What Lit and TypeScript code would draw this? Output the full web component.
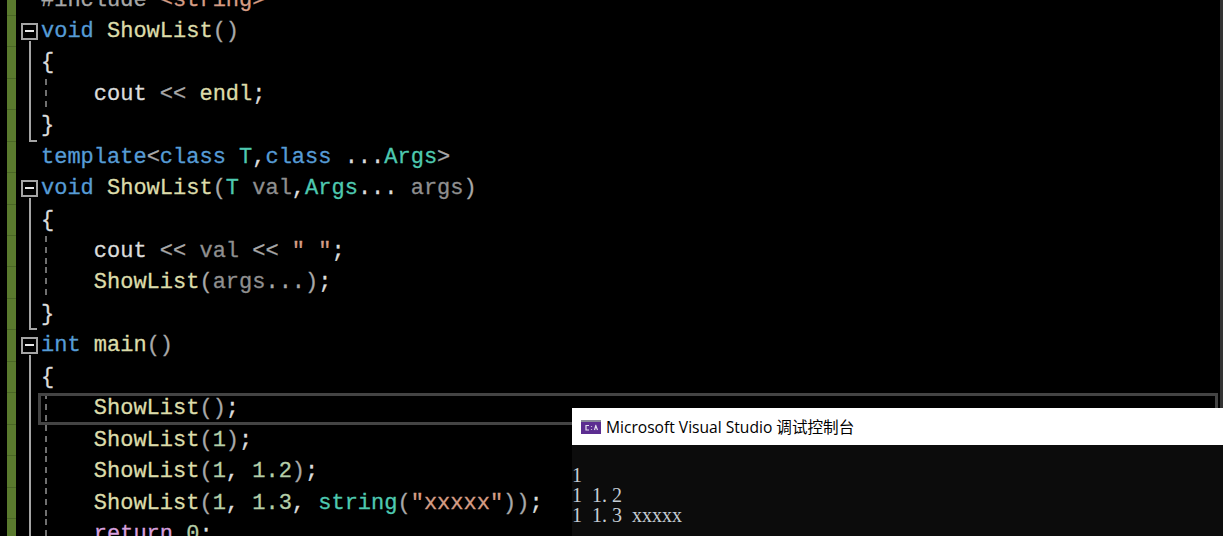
import { LitElement, html, css } from "lit";
import { customElement } from "lit/decorators.js";

type Seg = [string, string];
interface Line { fold: "" | "start" | "mid" | "end"; guide?: boolean; current?: boolean; segs: Seg[]; }

const k = (t: string): Seg => ["kw", t];
const f = (t: string): Seg => ["fn", t];
const p = (t: string): Seg => ["pl", t];
const g = (t: string): Seg => ["gr", t];
const a = (t: string): Seg => ["pa", t];
const c = (t: string): Seg => ["ty", t];
const n = (t: string): Seg => ["nu", t];
const s = (t: string): Seg => ["st", t];
const r = (t: string): Seg => ["rt", t];
const o = (t: string): Seg => ["or", t];

const LINES: Line[] = [
  { fold: "", segs: [g("#include "), o("<string>")] },
  { fold: "start", segs: [k("void "), f("ShowList"), g("()")] },
  { fold: "mid", segs: [p("{")] },
  { fold: "mid", guide: true, segs: [p("    cout "), g("<< "), f("endl"), p(";")] },
  { fold: "end", segs: [p("}")] },
  { fold: "", segs: [k("template"), g("<"), k("class "), c("T"), p(","), k("class "), p("..."), c("Args"), g(">")] },
  { fold: "start", segs: [k("void "), f("ShowList"), g("("), c("T "), a("val"), p(","), c("Args"), p("... "), a("args"), g(")")] },
  { fold: "mid", segs: [p("{")] },
  { fold: "mid", guide: true, segs: [p("    cout "), g("<< "), a("val"), g(" << "), s('" "'), p(";")] },
  { fold: "mid", guide: true, segs: [f("    ShowList"), g("("), a("args"), g("...)"), p(";")] },
  { fold: "end", segs: [p("}")] },
  { fold: "start", segs: [k("int "), f("main"), g("()")] },
  { fold: "mid", segs: [p("{")] },
  { fold: "mid", guide: true, current: true, segs: [f("    ShowList"), g("()"), p(";")] },
  { fold: "mid", guide: true, segs: [f("    ShowList"), g("("), n("1"), g(")"), p(";")] },
  { fold: "mid", guide: true, segs: [f("    ShowList"), g("("), n("1"), p(", "), n("1.2"), g(")"), p(";")] },
  { fold: "mid", guide: true, segs: [f("    ShowList"), g("("), n("1"), p(", "), n("1.3"), p(", "), c("string"), g("("), s('"xxxxx"'), g("))"), p(";")] },
  { fold: "mid", guide: true, segs: [r("    return "), n("0"), p(";")] },
];

@customElement("app-root")
export class AppRoot extends LitElement {
  static styles = css`
    :host { display: block; width: 1223px; height: 536px; background: #000; overflow: hidden; position: relative; }
    .editor { margin-top: -15.5px; }
    .row { display: flex; height: 31.44px; }
    .pad { width: 7px; flex: none; }
    .bar { width: 9px; flex: none; background: #5a7a2e; box-shadow: inset 0 -1px 0 #4a6626; }
    .foldcell { width: 25px; flex: none; position: relative; }
    .line { position: absolute; left: 13px; width: 2px; background: #a5a5a5; }
    .mid .line { top: 0; bottom: 0; }
    .end .line { top: 0; bottom: 0; }
    .end .foot { position: absolute; left: 13px; bottom: 0; width: 8px; height: 2px; background: #a5a5a5; }
    .box { position: absolute; left: 5px; top: 7px; width: 13px; height: 13px; border: 2px solid #a5a5a5; background: #000; }
    .box::after { content: ""; position: absolute; left: 2px; right: 2px; top: 5px; height: 2px; background: #e6e6e6; }
    .start .line { top: 25px; bottom: 0; }
    .code {
      flex: 1; position: relative; white-space: pre;
      font: 22px/31.44px "Liberation Mono", "DejaVu Sans Mono", monospace;
      -webkit-text-stroke: 0.3px;
    }
    .guide { background: repeating-linear-gradient(to bottom, #6f6f6f 0 6px, transparent 6px 11px) 4px 0 / 2px 100% no-repeat; }
    .current::after { content: ""; position: absolute; left: -3px; right: 5px; top: 0; bottom: 0; border: 3px solid #444; }
    .scroll { position: absolute; top: 0; right: 0; bottom: 0; width: 3px; background: #333; }
    .kw { color: #569cd6; }
    .fn { color: #dcdcaa; }
    .pl { color: #dcdcdc; }
    .gr { color: #a8a8a8; }
    .pa { color: #8f8f8f; }
    .ty { color: #4ec9b0; }
    .nu { color: #b5cea8; }
    .st, .or { color: #d69d85; }
    .rt { color: #d8a0df; }
    .console { position: absolute; left: 572px; top: 408px; right: 0; bottom: 0; background: #0c0c0c; display: flex; flex-direction: column; }
    .title { height: 37px; flex: none; background: #fff; display: flex; align-items: center; gap: 5px; padding-left: 9px; color: #000;
      font: 15.6px "Open Sans", "Noto Sans", "Noto Sans CJK SC", sans-serif; }
    .title svg { flex: none; }
    .out { padding-top: 20px; color: #c4ccd4; font: 20px/20px "Liberation Serif", "Noto Sans CJK SC", serif; }
    .out div { height: 20px; word-spacing: 5px; white-space: pre; }
    .dot { letter-spacing: 5px; }
  `;

  private foldCell(l: Line) {
    return html`<div class="foldcell ${l.fold}">
      ${l.fold === "start" ? html`<div class="box"></div><div class="line"></div>` : ""}
      ${l.fold === "mid" ? html`<div class="line"></div>` : ""}
      ${l.fold === "end" ? html`<div class="line"></div><div class="foot"></div>` : ""}
    </div>`;
  }

  render() {
    return html`
      <div class="editor">
        ${LINES.map((l) => html`<div class="row">
          <div class="pad"></div>
          <div class="bar"></div>
          ${this.foldCell(l)}
          <div class="code ${l.guide ? "guide" : ""} ${l.current ? "current" : ""}">${l.segs.map(
            ([cl, t]) => html`<span class=${cl}>${t}</span>`
          )}</div>
        </div>`)}
      </div>
      <div class="scroll"></div>
      <div class="console">
        <div class="title">
          <svg width="20" height="14" viewBox="0 0 20 14">
            <rect width="20" height="14" fill="#5c2d91"/>
            <rect x="0" y="0" width="20" height="2" fill="#8a8a9a"/>
            <path d="M8 5.5H5V10H8M10.5 6v.8M10.5 9v.8M15 5l-1.5 5M14.5 5l2 5" fill="none" stroke="#e4e0ee" stroke-width="1.2"/>
          </svg>
          <span>Microsoft Visual Studio 调试控制台</span>
        </div>
        <div class="out">
          <div>1</div>
          <div>1 1<span class="dot">.</span>2</div>
          <div>1 1<span class="dot">.</span>3 xxxxx</div>
        </div>
      </div>
    `;
  }
}
